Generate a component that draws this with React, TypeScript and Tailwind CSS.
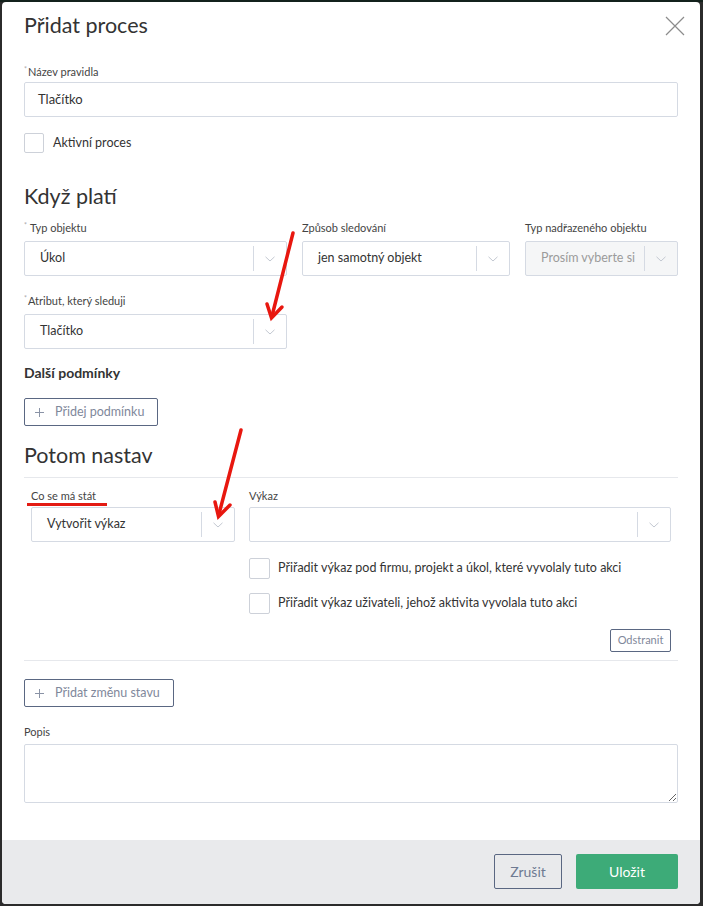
import React from "react";

const Chevron = () => (
  <svg width="10" height="6" viewBox="0 0 10 6" className="block">
    <path d="M0.5 0.8 L5 5 L9.5 0.8" fill="none" stroke="#c3c8d1" strokeWidth="1" />
  </svg>
);

function Select({ value, disabled, className = "" }: { value?: string; disabled?: boolean; className?: string }) {
  return (
    <div
      className={`flex h-[35px] items-stretch rounded-[2px] border border-[#d5dae3] ${disabled ? "bg-[#f5f6f7]" : "bg-white"} ${className}`}
    >
      <div className={`flex flex-1 items-center overflow-hidden whitespace-nowrap pl-[15px] text-[12.5px] ${disabled ? "text-[#9b9b9b]" : "text-[#333]"}`}>
        {value}
      </div>
      <div className="my-[4px] w-px bg-[#d5dae3]" />
      <div className="flex w-[32px] items-center justify-center">
        <Chevron />
      </div>
    </div>
  );
}

function Label({ children, req, space }: { children: React.ReactNode; req?: boolean; space?: boolean }) {
  return (
    <div className="flex h-[14px] items-start text-[11px] leading-[14px] text-[#444]">
      {req && <span className={`text-[7px] leading-[9px] text-[#aaa] ${space ? "mr-[3px]" : "mr-[1px]"}`}>*</span>}
      <span>{children}</span>
    </div>
  );
}

const Box = ({ className = "" }: { className?: string }) => (
  <div className={`shrink-0 rounded-[2px] border border-[#cdd1d9] bg-white ${className}`} />
);

const Plus = () => (
  <svg width="9" height="9" viewBox="0 0 9 9" className="block">
    <path d="M4.5 0 V9 M0 4.5 H9" stroke="#8a93a6" strokeWidth="1" />
  </svg>
);

export default function App() {
  return (
    <div className="relative h-[906px] w-[703px] overflow-hidden bg-[#2b2b2b] font-['Lato','Noto_Sans',sans-serif]">
      <div className="absolute left-0 top-0 h-[2px] w-full bg-[#13211c]" />
      <div className="absolute left-[2px] top-[2px] flex h-[902px] w-[698px] flex-col overflow-hidden rounded-[4px] bg-white">
        <div className="relative flex-1 px-[22px]">
          {/* close */}
          <svg className="absolute right-[15px] top-[14px]" width="20" height="20" viewBox="0 0 20 20">
            <path d="M1 1 L19 19 M19 1 L1 19" stroke="#8c8c8c" strokeWidth="1.2" />
          </svg>
          <div className="mt-[10px] text-[21.5px] leading-[26px] text-[#333]">Přidat proces</div>

          <div className="mt-[27px]">
            <Label req>Název pravidla</Label>
          </div>
          <div className="mt-[3px] flex h-[35px] items-center rounded-[2px] border border-[#d5dae3] pl-[13px] text-[13px] text-[#333]">
            Tlačítko
          </div>

          <div className="mt-[16px] flex h-[20px] items-center">
            <Box className="h-[20px] w-[20px]" />
            <span className="ml-[9px] text-[12.5px] text-[#333]">Aktivní proces</span>
          </div>

          <div className="mt-[30px] text-[21.5px] leading-[26px] text-[#333]">Když platí</div>

          <div className="mt-[12px] grid grid-cols-[263px_208px_153px] gap-x-[15px]">
            <Label req space>Typ objektu</Label>
            <Label>Způsob sledování</Label>
            <Label>Typ nadřazeného objektu</Label>
            <Select value="Úkol" className="mt-[6px]" />
            <Select value="jen samotný objekt" className="mt-[6px]" />
            <Select value="Prosím vyberte si" disabled className="mt-[6px]" />
          </div>

          <div className="mt-[18px] w-[263px]">
            <Label req>Atribut, který sleduji</Label>
            <Select value="Tlačítko" className="mt-[6px]" />
          </div>

          <div className="mt-[16px] text-[14px] font-bold leading-[16px] text-[#333]">Další podmínky</div>

          <div className="mt-[17px] flex h-[28px] w-[134px] items-center rounded-[2px] border border-[#5a6782] pl-[10px]">
            <Plus />
            <span className="ml-[11px] text-[12.5px] text-[#7f889b]">Přidej podmínku</span>
          </div>

          <div className="mt-[16px] text-[21.5px] leading-[26px] text-[#333]">Potom nastav</div>
          <div className="mt-[9px] h-px bg-[#e6e8ec]" />

          <div className="px-[7px]">
            <div className="mt-[11px] grid grid-cols-[204px_422px] gap-x-[14px]">
              <Label>Co se má stát</Label>
              <Label>Výkaz</Label>
              <Select value="Vytvořit výkaz" className="mt-[4px]" />
              <Select value="" className="mt-[4px]" />
              <div />
              <div>
                <div className="mt-[16px] flex h-[21px] items-center">
                  <Box className="h-[21px] w-[21px]" />
                  <span className="ml-[8px] text-[12.5px] text-[#333]">
                    Přiřadit výkaz pod firmu, projekt a úkol, které vyvolaly tuto akci
                  </span>
                </div>
                <div className="mt-[14px] flex h-[21px] items-center">
                  <Box className="h-[21px] w-[21px]" />
                  <span className="ml-[8px] text-[12.5px] text-[#333]">
                    Přiřadit výkaz uživateli, jehož aktivita vyvolala tuto akci
                  </span>
                </div>
              </div>
            </div>
            <div className="mt-[15px] flex justify-end">
              <div className="flex h-[23px] w-[61px] items-center justify-center rounded-[2px] border border-[#5a6782] text-[11px] text-[#7f889b]">
                Odstranit
              </div>
            </div>
          </div>

          <div className="mt-[8px] h-px bg-[#e6e8ec]" />

          <div className="mt-[18px] flex h-[28px] w-[150px] items-center rounded-[2px] border border-[#5a6782] pl-[10px]">
            <Plus />
            <span className="ml-[11px] text-[12.5px] text-[#7f889b]">Přidat změnu stavu</span>
          </div>

          <div className="mt-[18px]">
            <Label>Popis</Label>
          </div>
          <textarea
            readOnly
            className="mt-[5px] block h-[59px] w-full rounded-[2px] border border-[#d5dae3] outline-none"
          />
        </div>

        <div className="flex h-[64px] shrink-0 items-start justify-end gap-[14px] bg-[#e9eaec] pr-[22px] pt-[14px]">
          <div className="flex h-[35px] w-[68px] items-center justify-center rounded-[2px] border border-[#5a6782] text-[14px] text-[#6e7a92]">
            Zrušit
          </div>
          <div className="flex h-[35px] w-[102px] items-center justify-center rounded-[2px] bg-[#3dab78] text-[14px] text-white">
            Uložit
          </div>
        </div>
      </div>

      {/* annotations */}
      <svg className="pointer-events-none absolute left-0 top-0" width="703" height="906" viewBox="0 0 703 906">
        <g stroke="#e8170f" strokeWidth="3.5" strokeLinecap="round" fill="none">
          <path d="M293 233 L272 316" />
          <path d="M267 304 L271.5 318 L282 307" />
          <path d="M241 430 L219 514" />
          <path d="M215 502 L218.5 516.5 L230 505" />
        </g>
        <rect x="27" y="503" width="80" height="3" fill="#e31b13" />
      </svg>
    </div>
  );
}
